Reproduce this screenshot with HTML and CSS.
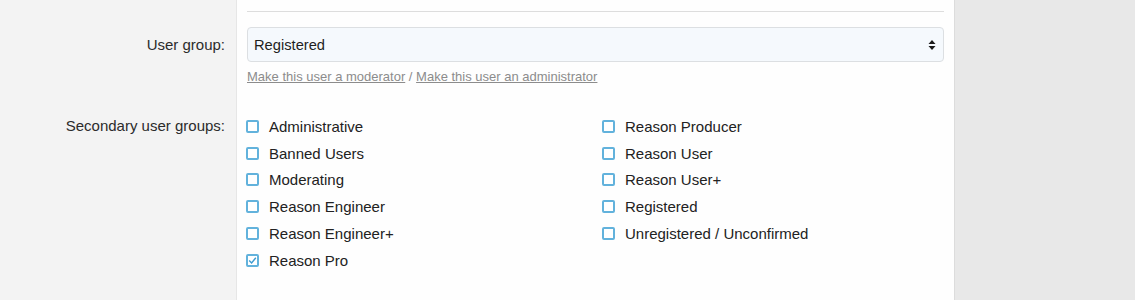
FILE: index.html
```html
<!DOCTYPE html>
<html lang="en">
<head>
    <meta charset="UTF-8">
    <meta name="viewport" content="width=device-width, initial-scale=1.0">
    <title>Edit User</title>
    <link rel="stylesheet" href="styles.css">
</head>
<body>
    <form class="form-block">
        <div class="label-cell"></div>
        <div class="field-cell field-top">
            <div class="rule"></div>
        </div>

        <div class="label-cell label-select">User group:</div>
        <div class="field-cell field-group">
            <div class="select-box">
                <span>Registered</span>
                <svg class="select-arrows" width="8" height="12" viewBox="0 0 8 12">
                    <path d="M4 1 L7.5 5 L0.5 5 Z" fill="#1a1a1a"/>
                    <path d="M4 11 L7.5 7 L0.5 7 Z" fill="#1a1a1a"/>
                </svg>
            </div>
            <p class="hint-links">
                <a href="#">Make this user a moderator</a> / <a href="#">Make this user an administrator</a>
            </p>
        </div>

        <div class="label-cell label-list">Secondary user groups:</div>
        <div class="field-cell field-list">
            <div class="check-columns">
                <ul class="check-list">
                    <li><span class="check"></span>Administrative</li>
                    <li><span class="check"></span>Banned Users</li>
                    <li><span class="check"></span>Moderating</li>
                    <li><span class="check"></span>Reason Engineer</li>
                    <li><span class="check"></span>Reason Engineer+</li>
                    <li>
                        <span class="check checked">
                            <svg width="9" height="9" viewBox="0 0 9 9"><path d="M1.2 4.6 L3.6 7 L7.8 1.8" fill="none" stroke="#3d9bd0" stroke-width="1.4"/></svg>
                        </span>Reason Pro
                    </li>
                </ul>
                <ul class="check-list">
                    <li><span class="check"></span>Reason Producer</li>
                    <li><span class="check"></span>Reason User</li>
                    <li><span class="check"></span>Reason User+</li>
                    <li><span class="check"></span>Registered</li>
                    <li><span class="check"></span>Unregistered / Unconfirmed</li>
                </ul>
            </div>
        </div>
    </form>
</body>
</html>
```

FILE: styles.css
```css
:root {
    --label-bg: #f3f3f3;
    --field-bg: #fefefe;
    --page-bg: #e8e8e8;
    --text-color: #252525;
    --check-color: #62b2dc;
}

body {
    margin: 0;
    background-color: var(--page-bg);
    font-family: 'Liberation Sans', Arial, Helvetica, sans-serif;
    color: var(--text-color);
}

.form-block {
    width: 955px;
    min-height: 100vh;
    display: grid;
    grid-template-columns: 236px 1fr;
    grid-template-rows: auto auto 1fr;
}

.label-cell {
    background-color: var(--label-bg);
    text-align: right;
    padding-right: 11px;
    font-size: 15px;
    color: #2b2b2b;
}

.field-cell {
    background-color: var(--field-bg);
    border-left: 1px solid #e6e6e6;
    border-right: 1px solid #dcdcdc;
    padding: 0 10px;
}

.rule {
    height: 11px;
    border-bottom: 1px solid #dddddd;
}

.label-select {
    padding-top: 15px;
    line-height: 35px;
}

.field-group {
    padding-top: 15px;
    padding-bottom: 14px;
}

.select-box {
    height: 33px;
    border: 1px solid #dcdfe2;
    border-radius: 4px;
    background-color: #f5f9fd;
    display: flex;
    align-items: center;
    justify-content: space-between;
    padding: 0 6px;
    font-size: 14.7px;
    color: #1e1e1e;
}

.select-arrows {
    margin-right: 1px;
}

.hint-links {
    margin: 7px 0 0;
    font-size: 13px;
    line-height: 16px;
    color: #8c8c8c;
}

.hint-links a {
    color: #8c8c8c;
}

.label-list {
    padding-top: 14px;
    line-height: 26.8px;
}

.field-list {
    padding-top: 14px;
}

.check-columns {
    display: grid;
    grid-template-columns: 356px 1fr;
}

.check-list {
    list-style: none;
    margin: 0;
    padding: 0;
}

.check-list li {
    display: flex;
    align-items: center;
    gap: 10px;
    height: 26.8px;
    font-size: 15px;
    color: #222222;
}

.check {
    width: 9px;
    height: 9px;
    border: 2px solid var(--check-color);
    border-radius: 2px;
    background: white;
    display: flex;
    align-items: center;
    justify-content: center;
    margin-left: -1px;
    flex: none;
}

.check svg {
    display: block;
}
```
